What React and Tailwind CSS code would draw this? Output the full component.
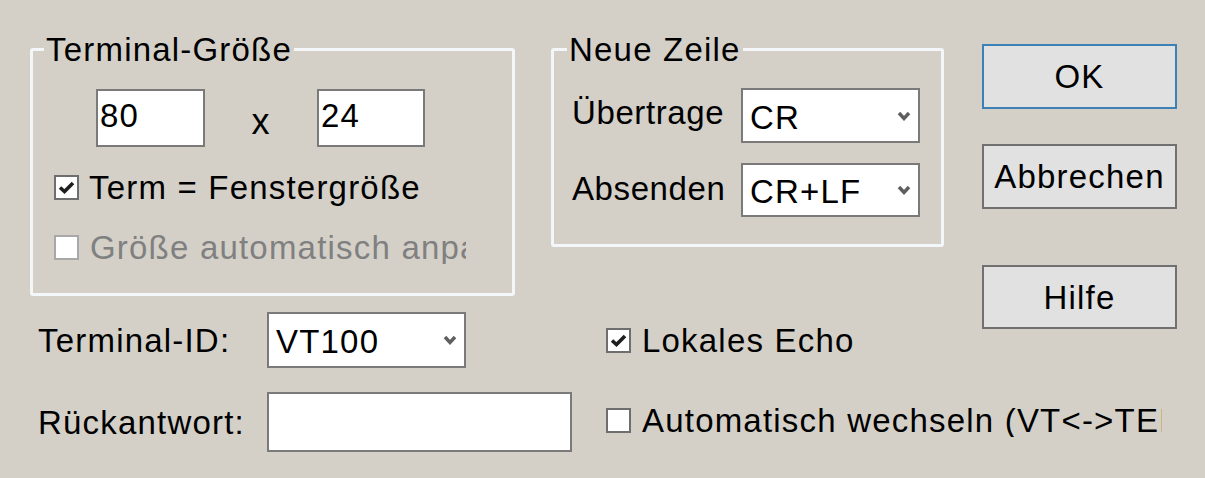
import React from 'react';

// Terminal-Einstellungen (Windows-Dialog, vergrößert)

const Chevron = () => (
  <svg width="14" height="10" viewBox="0 0 14 10" className="shrink-0">
    <path d="M2 2 L7 7.5 L12 2" fill="none" stroke="#5f5f5f" strokeWidth="3.4" />
  </svg>
);

const CheckBox = ({ checked, disabled }) => (
  <div
    className={
      disabled
        ? 'w-[25px] h-[25px] shrink-0 border-2 border-[#a8a8a8] bg-white flex items-center justify-center'
        : 'w-[25px] h-[25px] shrink-0 border-2 border-[#6e6e6e] bg-white flex items-center justify-center'
    }
  >
    {checked && (
      <svg width="17" height="13" viewBox="0 0 17 13">
        <path d="M2 6.5 L6.5 10.5 L15 2" fill="none" stroke="#1e1e1e" strokeWidth="3.6" />
      </svg>
    )}
  </div>
);

const Select = ({ value, className }) => (
  <div className={`shrink-0 border-2 border-[#7a7a7a] bg-white flex items-center justify-between pl-[7px] pr-[7px] ${className}`}>
    <span className="pt-[3px]">{value}</span>
    <Chevron />
  </div>
);

const Button = ({ children, primary, className }) => (
  <div
    className={`w-[195px] flex items-center justify-center bg-[#e1e1e1] border-2 ${
      primary ? 'border-[#3c80b6]' : 'border-[#707070]'
    } ${className}`}
  >
    {children}
  </div>
);

export default function App() {
  return (
    <div className="w-[1205px] h-[478px] overflow-hidden bg-[#d4d0c8] text-black font-['Liberation_Sans',Arial,sans-serif] text-[33px] leading-[33px] tracking-[1.2px] flex items-start pl-[30px] pt-[33px]">

      {/* Linke Spalte */}
      <div className="flex flex-col w-[485px] shrink-0">
        <fieldset className="h-[263px] border-[3px] border-[#f4f7fa] rounded-[3px]">
          <legend className="ml-[11px] px-[2px]">Terminal-Größe</legend>
          <div className="flex items-start pl-[63px] mt-[23px]">
            <div className="w-[109px] h-[58px] border-2 border-[#7a7a7a] bg-white pl-[2px] pt-[8px]">80</div>
            <div className="w-[112px] h-[58px] flex items-center justify-center pt-[6px] text-[36px]">x</div>
            <div className="w-[108px] h-[58px] border-2 border-[#7a7a7a] bg-white pl-[2px] pt-[8px]">24</div>
          </div>
          <div className="flex items-center h-[25px] pl-[21px] mt-[28px]">
            <CheckBox checked />
            <span className="ml-[10px] whitespace-nowrap">Term = Fenstergröße</span>
          </div>
          <div className="flex items-center h-[25px] pl-[21px] mt-[35px]">
            <CheckBox disabled />
            <span className="ml-[11px] w-[376px] overflow-hidden whitespace-nowrap text-[#808080]">
              Größe automatisch anpassen
            </span>
          </div>
        </fieldset>

        <div className="flex items-center pl-[8px] mt-[16px]">
          <span className="w-[229px] shrink-0">Terminal-ID:</span>
          <Select value="VT100" className="w-[199px] h-[56px]" />
        </div>
        <div className="flex items-center pl-[8px] mt-[24px]">
          <span className="w-[229px] shrink-0">Rückantwort:</span>
          <div className="w-[305px] h-[60px] shrink-0 border-2 border-[#7a7a7a] bg-white" />
        </div>
      </div>

      {/* Mittlere Spalte */}
      <div className="flex flex-col w-[393px] shrink-0 ml-[36px]">
        <fieldset className="h-[214px] border-[3px] border-[#f4f7fa] rounded-[3px]">
          <legend className="ml-[13px] px-[2px]">Neue Zeile</legend>
          <div className="flex items-center pl-[18px] mt-[22px]">
            <span className="w-[169px] shrink-0 pb-[6px] tracking-[0.6px]">Übertrage</span>
            <Select value="CR" className="w-[179px] h-[55px]" />
          </div>
          <div className="flex items-center pl-[18px] mt-[20px]">
            <span className="w-[169px] shrink-0 pb-[4px] tracking-[0.6px]">Absenden</span>
            <Select value="CR+LF" className="w-[179px] h-[54px]" />
          </div>
        </fieldset>

        <div className="flex items-center h-[25px] pl-[55px] mt-[81px]">
          <CheckBox checked />
          <span className="ml-[11px] whitespace-nowrap">Lokales Echo</span>
        </div>
        <div className="flex items-center h-[25px] pl-[55px] mt-[55px]">
          <CheckBox />
          <span className="ml-[11px] w-[520px] shrink-0 overflow-hidden whitespace-nowrap">
            Automatisch wechseln (VT&lt;-&gt;TEK)
          </span>
        </div>
      </div>

      {/* Schaltflächen */}
      <div className="flex flex-col ml-[38px] mt-[11px]">
        <Button primary className="h-[65px]">OK</Button>
        <Button className="h-[65px] mt-[35px]">Abbrechen</Button>
        <Button className="h-[64px] mt-[56px]">Hilfe</Button>
      </div>
    </div>
  );
}
